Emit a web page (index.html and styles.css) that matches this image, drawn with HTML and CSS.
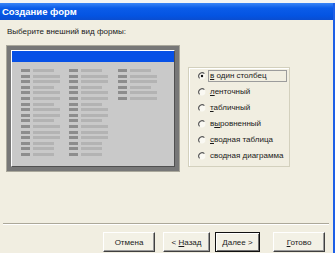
FILE: index.html
```html
<!DOCTYPE html>
<html lang="ru">
<head>
  <meta charset="UTF-8" />
  <title>Создание форм</title>
  <link rel="stylesheet" href="styles.css">
</head>
<body>
  <div class="screen-top"></div>
  <div class="wizard">
    <div class="titlebar">Создание форм</div>

    <div class="wizard-body">
      <p class="prompt">Выберите внешний вид формы:</p>

      <div class="main">
        <!-- preview of the chosen form layout -->
        <div class="preview">
          <div class="thumb">
            <div class="thumb-title"></div>
            <div class="thumb-fields">
              <div class="thumb-col">
                <span class="fld short"></span>
                <span class="fld"></span>
                <span class="fld"></span>
                <span class="fld short"></span>
                <span class="fld"></span>
                <span class="fld"></span>
                <span class="fld short"></span>
                <span class="fld"></span>
                <span class="fld"></span>
                <span class="fld short"></span>
                <span class="fld"></span>
                <span class="fld"></span>
                <span class="fld"></span>
                <span class="fld short"></span>
                <span class="fld short"></span>
                <span class="fld short"></span>
              </div>
              <div class="thumb-col">
                <span class="fld short"></span>
                <span class="fld"></span>
                <span class="fld"></span>
                <span class="fld short"></span>
                <span class="fld"></span>
                <span class="fld"></span>
                <span class="fld short"></span>
                <span class="fld"></span>
                <span class="fld"></span>
                <span class="fld short"></span>
                <span class="fld"></span>
                <span class="fld"></span>
                <span class="fld"></span>
                <span class="fld short"></span>
                <span class="fld short"></span>
                <span class="fld short"></span>
              </div>
              <div class="thumb-col">
                <span class="fld short"></span>
                <span class="fld"></span>
                <span class="fld"></span>
                <span class="fld short"></span>
                <span class="fld"></span>
                <span class="fld"></span>
              </div>
            </div>
          </div>
        </div>

        <!-- layout choices -->
        <div class="layout-group">
          <div class="option">
            <svg class="radio" width="8" height="8" viewBox="0 0 8 8"><circle cx="4" cy="4" r="3.4" fill="#faf9f3"/><path d="M6.4 1.6 A3.4 3.4 0 0 0 1.6 6.4" fill="none" stroke="#5a5a5a" stroke-width="1.1"/><circle cx="4" cy="4" r="1.2" fill="#111"/></svg>
            <span class="option-text focus"><u>в</u> один столбец</span>
          </div>
          <div class="option">
            <svg class="radio" width="8" height="8" viewBox="0 0 8 8"><circle cx="4" cy="4" r="3.4" fill="#faf9f3"/><path d="M6.4 1.6 A3.4 3.4 0 0 0 1.6 6.4" fill="none" stroke="#5a5a5a" stroke-width="1.1"/></svg>
            <span class="option-text"><u>л</u>енточный</span>
          </div>
          <div class="option">
            <svg class="radio" width="8" height="8" viewBox="0 0 8 8"><circle cx="4" cy="4" r="3.4" fill="#faf9f3"/><path d="M6.4 1.6 A3.4 3.4 0 0 0 1.6 6.4" fill="none" stroke="#5a5a5a" stroke-width="1.1"/></svg>
            <span class="option-text"><u>т</u>абличный</span>
          </div>
          <div class="option">
            <svg class="radio" width="8" height="8" viewBox="0 0 8 8"><circle cx="4" cy="4" r="3.4" fill="#faf9f3"/><path d="M6.4 1.6 A3.4 3.4 0 0 0 1.6 6.4" fill="none" stroke="#5a5a5a" stroke-width="1.1"/></svg>
            <span class="option-text">в<u>ы</u>ровненный</span>
          </div>
          <div class="option">
            <svg class="radio" width="8" height="8" viewBox="0 0 8 8"><circle cx="4" cy="4" r="3.4" fill="#faf9f3"/><path d="M6.4 1.6 A3.4 3.4 0 0 0 1.6 6.4" fill="none" stroke="#5a5a5a" stroke-width="1.1"/></svg>
            <span class="option-text"><u>с</u>водная таблица</span>
          </div>
          <div class="option">
            <svg class="radio" width="8" height="8" viewBox="0 0 8 8"><circle cx="4" cy="4" r="3.4" fill="#faf9f3"/><path d="M6.4 1.6 A3.4 3.4 0 0 0 1.6 6.4" fill="none" stroke="#5a5a5a" stroke-width="1.1"/></svg>
            <span class="option-text">сводная <u>д</u>иаграмма</span>
          </div>
        </div>
      </div>

      <div class="separator"></div>

      <div class="buttons">
        <button class="btn btn-cancel">Отмена</button>
        <button class="btn btn-back">&lt; <u>Н</u>азад</button>
        <button class="btn btn-next default"><u>Д</u>алее &gt;</button>
        <button class="btn btn-finish"><u>Г</u>отово</button>
      </div>
    </div>
  </div>
</body>
</html>
```

FILE: styles.css
```css
body {
  margin: 0;
  width: 335px;
  height: 253px;
  overflow: hidden;
  background: #f1eee1;
  font-family: 'Liberation Sans', Arial, sans-serif;
  color: #1a1a1a;
}

.screen-top {
  height: 3px;
  background: #f4f4f4;
}

.wizard {
  height: 250px;
  box-sizing: border-box;
  border-right: 2px solid #1d5fe6;
  display: flex;
  flex-direction: column;
}

.titlebar {
  height: 17px;
  line-height: 17px;
  padding-left: 2px;
  background: linear-gradient(#3a85f6, #0b5ce9 30%, #0454e2 75%, #0a4dd0);
  color: #fff;
  font-size: 9.5px;
  font-weight: bold;
}

.wizard-body {
  flex: 1;
  display: flex;
  flex-direction: column;
}

.prompt {
  margin: 6px 0 0 7px;
  font-size: 8px;
  line-height: 12px;
}

.main {
  display: flex;
  margin-top: 7px;
  padding-left: 6px;
}

/* form thumbnail */
.preview {
  width: 174px;
  height: 127px;
  box-sizing: border-box;
  border: 1px solid #aaa89c;
  background: #777;
  padding: 4px;
}

.thumb {
  height: 100%;
  box-sizing: border-box;
  border: 1px solid;
  border-color: #fff #505050 #505050 #fff;
  background: #c9c9c9;
}

.thumb-title {
  height: 11px;
  background: #0650e6;
}

.thumb-fields {
  display: grid;
  grid-template-columns: 48px 49px 49px;
  padding: 7px 0 0 9px;
}

.thumb-col {
  display: flex;
  flex-direction: column;
  gap: 2.6px;
}

.fld {
  display: flex;
  gap: 3px;
  height: 3px;
}

.fld::before {
  content: "";
  width: 9px;
  background: #8d8d8d;
}

.fld::after {
  content: "";
  width: 27px;
  background: #b3b3b3;
}

.fld.short::after {
  width: 21px;
}

/* radio group */
.layout-group {
  margin: 22px 0 0 8px;
  width: 102px;
  height: 100px;
  box-sizing: border-box;
  border: 1px solid #d3d0bd;
  box-shadow: inset 1px 1px 0 #fff;
}

.option {
  display: flex;
  align-items: center;
  gap: 2px;
  height: 16px;
  padding-left: 9px;
}

.radio {
  flex: none;
}

.option-text {
  font-size: 8px;
  line-height: 10px;
  padding: 0 1px;
  border: 1px solid transparent;
  white-space: nowrap;
}

.option-text.focus {
  width: 79px;
  box-sizing: border-box;
  border-color: #9c9c9c;
}

.separator {
  margin: 51px 4px 0 3px;
  border-top: 1px solid #aca899;
  border-bottom: 1px solid #fff;
}

/* wizard buttons */
.buttons {
  display: flex;
  margin-top: 7px;
  padding-left: 103px;
}

.btn {
  height: 20px;
  padding: 0;
  font-family: 'Liberation Sans', Arial, sans-serif;
  font-size: 8px;
  color: #1a1a1a;
  background: #f3f1e6;
  border: 1px solid;
  border-color: #fff #404040 #404040 #fff;
  box-shadow: inset -1px -1px 0 #9a9a9a;
}

.btn-cancel {
  width: 52px;
}

.btn-back {
  width: 47px;
  margin-left: 8px;
}

.btn-next {
  width: 45px;
  margin-left: 5px;
}

.btn-finish {
  width: 52px;
  margin-left: 13px;
}

.btn.default {
  border-color: #111;
  box-shadow: inset 1px 1px 0 #fff, inset -1px -1px 0 #707070;
}
```
